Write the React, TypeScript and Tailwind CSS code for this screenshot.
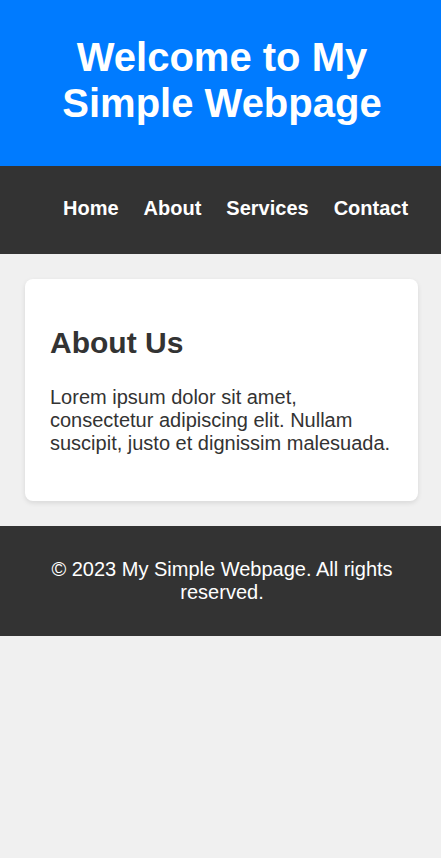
const links = ['Home', 'About', 'Services', 'Contact'];

export default function App() {
  return (
    <div className="min-h-screen bg-[#f0f0f0] font-['Liberation_Sans',Arial,sans-serif]">
      <header className="bg-[#007bff] pt-[34px] pb-[40px] pl-[21px] pr-[18px] text-center text-white">
        <h1 className="text-[40px] leading-[46px] font-bold">Welcome to My Simple Webpage</h1>
      </header>

      <nav className="bg-[#333333] pt-[31px] pb-[32px]">
        <ul className="flex gap-[25px] pl-[63px]">
          {links.map((l) => (
            <li key={l}>
              <a href="#" className="text-[20px] leading-[23px] font-bold text-white">
                {l}
              </a>
            </li>
          ))}
        </ul>
      </nav>

      <main className="py-[25px] pl-[25px] pr-[23px]">
        <section className="bg-white rounded-[8px] shadow-[0_2px_5px_rgba(0,0,0,0.1)] pt-[47px] pb-[46px] px-[25px] text-[#333333]">
          <h2 className="text-[30px] leading-[34.5px] font-bold mb-[25px]">About Us</h2>
          <p className="text-[20px] leading-[23px]">
            Lorem ipsum dolor sit amet, consectetur adipiscing elit. Nullam suscipit, justo et dignissim malesuada.
          </p>
        </section>
      </main>

      <footer className="bg-[#333333] text-white text-center pt-[32px] pb-[32px] pl-[21px] pr-[18px]">
        <p className="text-[20px] leading-[23px]">© 2023 My Simple Webpage. All rights reserved.</p>
      </footer>
    </div>
  );
}
